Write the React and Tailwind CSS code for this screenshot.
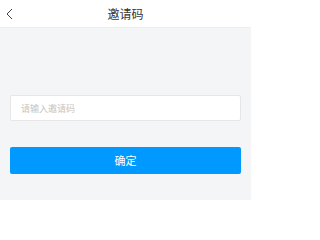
import React from "react";

export default function App() {
  return (
    <div className="w-[251px] h-[200px] bg-[#f4f5f7] flex flex-col" style={{ fontFamily: '"Noto Sans CJK SC", "Noto Sans", sans-serif' }}>
      <div className="h-[28px] bg-white flex items-center relative border-b border-[#eeeeee]">
        <svg className="absolute left-[5px] top-[8px]" width="10" height="12" viewBox="0 0 10 12" fill="none">
          <path d="M7 1 L2 6 L7 11" stroke="#444" strokeWidth="1" />
        </svg>
        <div className="flex-1 text-center text-[12px] text-[#333] leading-none">邀请码</div>
      </div>
      <div className="px-[10px] pt-[67px] flex flex-col">
        <div className="h-[26px] bg-white border border-[#e6e6e6] rounded-[2px] flex items-center pl-[10px]">
          <span className="text-[9px] text-[#c4c4c4] leading-none">请输入邀请码</span>
        </div>
        <div className="mt-[26px] h-[27px] bg-[#0099ff] rounded-[2px] flex items-center justify-center">
          <span className="text-[11px] text-white leading-none">确定</span>
        </div>
      </div>
    </div>
  );
}
